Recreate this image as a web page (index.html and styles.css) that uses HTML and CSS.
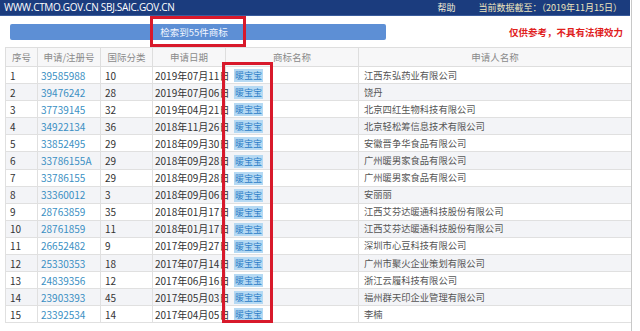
FILE: index.html
```html
<!DOCTYPE html>
<html lang="zh-CN">
<head>
<meta charset="utf-8">
<link rel="stylesheet" href="styles.css">
</head>
<body>
<div class="page">
  <div class="topbar">
    <span class="site">WWW.CTMO.GOV.CN SBJ.SAIC.GOV.CN</span>
    <span class="info"><span class="help">帮助</span><span class="date">当前数据截至：（2019年11月15日）</span></span>
  </div>
  <div class="toolbar">
    <div class="count">检索到55件商标</div>
    <div class="note">仅供参考，不具有法律效力</div>
    <div class="mark mark-count"></div>
  </div>
  <div class="tablewrap">
    <table class="grid">
      <colgroup>
        <col class="c1"><col class="c2"><col class="c3"><col class="c4"><col class="c5"><col class="c6">
      </colgroup>
      <thead>
        <tr><th>序号</th><th>申请/注册号</th><th>国际分类</th><th>申请日期</th><th>商标名称</th><th>申请人名称</th></tr>
      </thead>
      <tbody>
        <tr><td>1</td><td class="no">39585988</td><td>10</td><td class="dt">2019年07月11日</td><td><span class="tm">暖宝宝</span></td><td class="ap">江西东弘药业有限公司</td></tr>
        <tr><td>2</td><td class="no">39476242</td><td>28</td><td class="dt">2019年07月06日</td><td><span class="tm">暖宝宝</span></td><td class="ap">饶丹</td></tr>
        <tr><td>3</td><td class="no">37739145</td><td>32</td><td class="dt">2019年04月21日</td><td><span class="tm">暖宝宝</span></td><td class="ap">北京四红生物科技有限公司</td></tr>
        <tr><td>4</td><td class="no">34922134</td><td>36</td><td class="dt">2018年11月26日</td><td><span class="tm">暖宝宝</span></td><td class="ap">北京轻松筹信息技术有限公司</td></tr>
        <tr><td>5</td><td class="no">33852495</td><td>29</td><td class="dt">2018年09月30日</td><td><span class="tm">暖宝宝</span></td><td class="ap">安徽晋争华食品有限公司</td></tr>
        <tr><td>6</td><td class="no">33786155A</td><td>29</td><td class="dt">2018年09月28日</td><td><span class="tm">暖宝宝</span></td><td class="ap">广州暖男家食品有限公司</td></tr>
        <tr><td>7</td><td class="no">33786155</td><td>29</td><td class="dt">2018年09月28日</td><td><span class="tm">暖宝宝</span></td><td class="ap">广州暖男家食品有限公司</td></tr>
        <tr><td>8</td><td class="no">33360012</td><td>3</td><td class="dt">2018年09月06日</td><td><span class="tm">暖宝宝</span></td><td class="ap">安丽丽</td></tr>
        <tr><td>9</td><td class="no">28763859</td><td>35</td><td class="dt">2018年01月17日</td><td><span class="tm">暖宝宝</span></td><td class="ap">江西艾芬达暖通科技股份有限公司</td></tr>
        <tr><td>10</td><td class="no">28761859</td><td>11</td><td class="dt">2018年01月17日</td><td><span class="tm">暖宝宝</span></td><td class="ap">江西艾芬达暖通科技股份有限公司</td></tr>
        <tr><td>11</td><td class="no">26652482</td><td>9</td><td class="dt">2017年09月27日</td><td><span class="tm">暖宝宝</span></td><td class="ap">深圳市心豆科技有限公司</td></tr>
        <tr><td>12</td><td class="no">25330353</td><td>18</td><td class="dt">2017年07月14日</td><td><span class="tm">暖宝宝</span></td><td class="ap">广州市聚火企业策划有限公司</td></tr>
        <tr><td>13</td><td class="no">24839356</td><td>12</td><td class="dt">2017年06月16日</td><td><span class="tm">暖宝宝</span></td><td class="ap">浙江云履科技有限公司</td></tr>
        <tr><td>14</td><td class="no">23903393</td><td>45</td><td class="dt">2017年05月03日</td><td><span class="tm">暖宝宝</span></td><td class="ap">福州群天印企业管理有限公司</td></tr>
        <tr><td>15</td><td class="no">23392534</td><td>14</td><td class="dt">2017年04月05日</td><td><span class="tm">暖宝宝</span></td><td class="ap">李楠</td></tr>
      </tbody>
    </table>
    <div class="mark mark-col"></div>
  </div>
</div>
</body>
</html>
```

FILE: styles.css
```css
html, body {
  margin: 0;
  padding: 0;
  background: #ffffff;
}
body {
  font-family: "Noto Sans CJK SC", "Noto Sans", sans-serif;
  font-size: 10px;
  color: #333;
}
.page {
  position: relative;
  width: 631px;
  height: 331px;
  border-right: 1px solid #c8c8c8;
  overflow: hidden;
}
.topbar {
  width: 630px;
  height: 16px;
  box-sizing: border-box;
  background: #1b3c7e;
  border-bottom: 1px solid #3a5c9c;
  display: flex;
  justify-content: space-between;
  align-items: center;
  padding: 0 8px 0 4px;
  color: #ffffff;
  font-size: 10px;
  line-height: 15px;
}
.site {
  font-family: "Open Sans", "Noto Sans", sans-serif;
  font-size: 10px;
  letter-spacing: -0.3px;
}
.info {
  display: flex;
  gap: 23px;
  color: #efe6bd;
  font-size: 9px;
}
.help { color: #f4efd8; }
.toolbar {
  position: relative;
  height: 31px;
  display: flex;
  align-items: center;
  padding-left: 10px;
}
.count {
  width: 376px;
  height: 16px;
  background: #5d8fd5;
  border-radius: 2px;
  color: #f2f6ff;
  font-size: 9.5px;
  line-height: 16px;
  text-align: center;
  padding-right: 8px;
  box-sizing: border-box;
}
.note {
  margin-left: auto;
  margin-right: 8px;
  color: #e0201c;
  font-weight: bold;
  font-size: 9.5px;
}
.mark {
  position: absolute;
  border: 3px solid #d8192b;
  box-sizing: border-box;
}
.mark-count {
  left: 150px;
  top: 0;
  width: 96px;
  height: 31px;
}
.tablewrap {
  position: relative;
  padding-left: 5px;
}
.grid {
  width: 626px;
  border-collapse: collapse;
  table-layout: fixed;
}
.c1 { width: 32px; }
.c2 { width: 63px; }
.c3 { width: 52px; }
.c4 { width: 73px; }
.c5 { width: 133px; }
.c6 { width: 273px; }
.grid th {
  height: 18px;
  background: #f7f7f8;
  color: #8a8a8a;
  font-weight: normal;
  font-size: 9.5px;
  border: 1px solid #dedede;
  padding: 0;
  text-align: center;
}
.grid td {
  height: 16.1px;
  border: 1px solid #e0e0e0;
  padding: 0 0 0 4px;
  white-space: nowrap;
  line-height: 15px;
  color: #333;
}
.grid tbody tr:nth-child(even) td {
  background: #f3f4f7;
}
.grid td.no {
  color: #3a8fc3;
  padding-left: 3px;
}
.grid td.dt {
  padding-left: 2px;
  font-size: 10px;
}
.grid td.ap {
  color: #555;
  font-size: 9.3px;
  padding-left: 5px;
}
.tm {
  margin-left: 4px;
  padding: 0 1px;
  background: #b5d9f3;
  color: #2a7cc6;
  font-size: 9px;
}
.mark-col {
  left: 222px;
  top: 15px;
  width: 51px;
  height: 261px;
}
```
